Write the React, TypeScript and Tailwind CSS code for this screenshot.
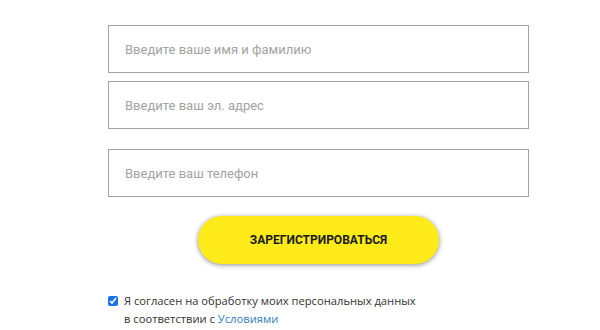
import React from 'react'

const fields = [
  { placeholder: 'Введите ваше имя и фамилию', type: 'text', gap: 'mt-0' },
  { placeholder: 'Введите ваш эл. адрес', type: 'email', gap: 'mt-2' },
  { placeholder: 'Введите ваш телефон', type: 'tel', gap: 'mt-5' },
]

export default function App() {
  return (
    <div className="w-[600px] h-[330px] bg-white overflow-hidden">
      <form className="ml-[108px] w-[421px] pt-[25px] flex flex-col">
        {fields.map((f) => (
          <input
            key={f.placeholder}
            type={f.type}
            placeholder={f.placeholder}
            className={`${f.gap} h-12 w-full border border-[#a3a3a3] bg-white px-4 text-[13px] text-[#333] placeholder:text-[#a3a3a3] outline-none font-['Roboto',sans-serif]`}
          />
        ))}

        <div className="mt-[19px] flex justify-center">
          <button
            type="button"
            className="h-12 w-[241px] rounded-full bg-[#ffea1a] shadow-[0_1px_5px_rgba(0,0,0,0.45)] text-[12px] font-bold text-[#1b1b1b] font-['Roboto',sans-serif]"
          >
            ЗАРЕГИСТРИРОВАТЬСЯ
          </button>
        </div>

        <label className="mt-[28px] flex items-start gap-[6px] text-[11.2px] leading-[18px] text-[#333] font-['Open_Sans',sans-serif]">
          <input type="checkbox" defaultChecked className="mt-[4px] h-[10px] w-[10px] accent-[#1a73e8]" />
          <span>
            Я согласен на обработку моих персональных данных
            <br />
            в соответствии с <a href="#" className="text-[#2f7fc1]">Условиями</a>
          </span>
        </label>
      </form>
    </div>
  )
}
